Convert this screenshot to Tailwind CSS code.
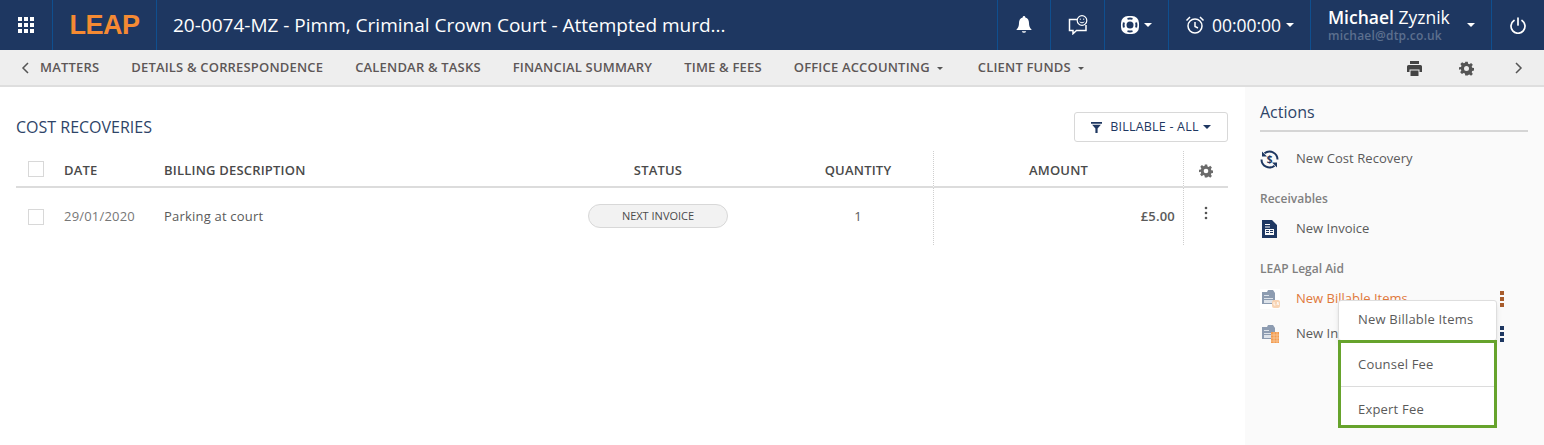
<!DOCTYPE html>
<html lang="en">
<head>
  <meta charset="UTF-8" />
  <title>Cost Recoveries - LEAP</title>
  <script src="https://cdn.jsdelivr.net/npm/@tailwindcss/browser@4"></script>
</head>
<body class="h-[445px] w-[1544px] overflow-hidden bg-white font-['Open_Sans',sans-serif] text-[13px] text-[#5a5a5a]">

  <!-- Top bar -->
  <header class="flex h-[50px] items-stretch bg-[#1e3761] text-white">
    <div class="flex w-[53px] items-center justify-center border-r border-[#0f4f8f]">
      <svg width="16" height="16" viewBox="0 0 16 16" fill="#fff"><rect x="0" y="0" width="4" height="4"/><rect x="6" y="0" width="4" height="4"/><rect x="12" y="0" width="4" height="4"/><rect x="0" y="6" width="4" height="4"/><rect x="6" y="6" width="4" height="4"/><rect x="12" y="6" width="4" height="4"/><rect x="0" y="12" width="4" height="4"/><rect x="6" y="12" width="4" height="4"/><rect x="12" y="12" width="4" height="4"/></svg>
    </div>
    <div class="flex w-[104px] items-center justify-center border-r border-[#0f4f8f] font-['Liberation_Sans',sans-serif] text-[27px] font-bold tracking-[-0.5px] text-[#f58a33]">LEAP</div>
    <div class="flex-1 pl-[16px] text-[19px] leading-[50px]">20-0074-MZ - Pimm, Criminal Crown Court - Attempted murd...</div>
    <div class="flex w-[53px] items-center justify-center border-l border-[#0f4f8f]">
      <svg width="16" height="18" viewBox="0 0 16 18" fill="#fff"><path d="M8 0a1.300 1.300 0 0 1 1.300 1.400C12 2 13 4.200 13 7c0 3 .8 5 2.500 6.500V14H.5v-.5C2.200 12 3 10 3 7c0-2.800 1-5 3.700-5.600A1.300 1.300 0 0 1 8 0z"/><path d="M5.800 15.200h4.400a2.300 2.300 0 0 1-4.400 0z"/></svg>
    </div>
    <div class="flex w-[54px] items-center justify-center border-l border-[#0f4f8f]">
      <svg width="20" height="20" viewBox="0 0 20 20" fill="none" stroke="#fff" stroke-width="1.500"><path d="M9 4.500H1.500v11H5v3.200l3.500-3.200h9.500V10"/><circle cx="14" cy="5.500" r="4.800" fill="#1e3761" stroke-width="1.200"/><path d="M11.700 6.800c1.200 1.300 3.400 1.300 4.600 0" stroke-width="1"/><path d="M12.300 3.600v1.200M15.700 3.600v1.200" stroke-width="1"/></svg>
    </div>
    <div class="flex w-[64px] items-center justify-center gap-[5px] border-l border-[#0f4f8f]">
      <svg width="18" height="18" viewBox="0 0 18 18"><rect width="18" height="18" rx="7" fill="#fff"/><circle cx="9" cy="9" r="3.500" fill="#1e3761"/><path d="M6.500 2.900Q9 2.200 11.500 2.900M15.100 6.500Q15.800 9 15.100 11.500M11.500 15.100Q9 15.800 6.500 15.100M2.900 11.500Q2.200 9 2.900 6.500" fill="none" stroke="#1e3761" stroke-width="2"/></svg>
      <span class="h-0 w-0 border-x-[4px] border-t-[4px] border-x-transparent border-t-white"></span>
    </div>
    <div class="flex w-[142px] items-center justify-center gap-[5px] border-l border-[#0f4f8f] text-[17.500px]">
      <svg class="mr-[2px]" width="20" height="20" viewBox="0 0 20 20" fill="none" stroke="#fff" stroke-width="1.500"><circle cx="10" cy="11" r="7"/><path d="M10 7v4.500l3 1.500"/><path d="M1.500 5.500L5 2M18.500 5.500L15 2"/></svg>
      <span>00:00:00</span>
      <span class="h-0 w-0 border-x-[4px] border-t-[4px] border-x-transparent border-t-white"></span>
    </div>
    <div class="flex w-[181px] items-center border-l border-[#0f4f8f] pl-[17px]">
      <div class="w-[139px]">
        <div class="-mt-[1px] text-[17.500px] leading-[20px]"><span class="font-semibold">Michael</span> Zyznik</div>
        <div class="mt-[1px] text-[12px] font-semibold leading-[15px] tracking-[0.2px] text-[#5c6f8e]">michael@dtp.co.uk</div>
      </div>
      <span class="h-0 w-0 border-x-[4px] border-t-[4px] border-x-transparent border-t-white"></span>
    </div>
    <div class="flex w-[53px] items-center justify-center border-l border-[#0f4f8f]">
      <svg width="16" height="17" viewBox="0 0 16 17" fill="none" stroke="#fff" stroke-width="1.700" stroke-linecap="round"><path d="M8 1v7"/><path d="M4 3.500a7 7 0 1 0 8 0"/></svg>
    </div>
  </header>

  <!-- Sub nav -->
  <nav class="flex h-[37px] items-center border-b-2 border-[#dedede] bg-[#eeeeee] pt-[1px] text-[#5d5757]">
    <svg class="ml-[21px] mr-[11px]" width="8" height="12" viewBox="0 0 8 12" fill="none" stroke="#555" stroke-width="1.500"><path d="M7 1L2 6l5 5"/></svg>
    <div class="flex items-center gap-[32px] text-[13px] font-semibold tracking-[0.18px]">
      <span>MATTERS</span>
      <span>DETAILS &amp; CORRESPONDENCE</span>
      <span>CALENDAR &amp; TASKS</span>
      <span>FINANCIAL SUMMARY</span>
      <span>TIME &amp; FEES</span>
      <span class="mr-[3px] flex items-center gap-[7px]">OFFICE ACCOUNTING <span class="h-0 w-0 border-x-[3px] border-t-[3px] border-x-transparent border-t-[#555]"></span></span>
      <span class="flex items-center gap-[7px]">CLIENT FUNDS <span class="h-0 w-0 border-x-[3px] border-t-[3px] border-x-transparent border-t-[#555]"></span></span>
    </div>
    <div class="ml-auto flex items-center">
      <svg width="15" height="15" viewBox="0 0 15 15" fill="#444"><path d="M3 0h9v3H3zM1.500 4h12A1.500 1.500 0 0 1 15 5.500V11h-2.500V8.500h-10V11H0V5.500A1.500 1.500 0 0 1 1.500 4z"/><path d="M3.500 9.500h8V15h-8z"/></svg>
      <svg class="ml-[37px]" width="15" height="15" viewBox="0 0 24 24" fill="#555"><path fill-rule="evenodd" d="M10 1h4l.6 3.200 2 .8 2.700-1.800 2.800 2.800-1.800 2.700.8 2 3.200.6v4l-3.200.6-.8 2 1.800 2.700-2.800 2.800-2.700-1.800-2 .8L14 23h-4l-.6-3.200-2-.8-2.700 1.800-2.800-2.800 1.800-2.700-.8-2L0 14v-4l3.200-.6.8-2-1.800-2.700 2.800-2.800 2.700 1.800 2-.8zM12 8a4 4 0 1 0 0 8 4 4 0 0 0 0-8z"/></svg>
      <svg class="ml-[41px] mr-[21px]" width="8" height="12" viewBox="0 0 8 12" fill="none" stroke="#555" stroke-width="1.500"><path d="M1 1l5 5-5 5"/></svg>
    </div>
  </nav>

  <div class="flex h-[358px]">
    <!-- Main -->
    <main class="w-[1245px] pl-[16px] pr-[17px]">
      <div class="flex h-[64px] items-end justify-between pb-[9px]">
        <h1 class="mb-[3px] text-[16px] leading-[24px] text-[#2e4468]">COST RECOVERIES</h1>
        <button class="flex h-[30px] w-[154px] items-center justify-center gap-[8px] rounded-[3px] border border-[#d8d8d8] text-[12.500px] tracking-[0.2px] text-[#1e3761]">
          <svg width="11" height="11" viewBox="0 0 10 10" fill="#1e3761"><path d="M0 0h10v1.500H0zM1 2.500h8L6 6v4H4V6z"/></svg>
          BILLABLE - ALL
          <span class="-ml-[4px] h-0 w-0 border-x-[4px] border-t-[4px] border-x-transparent border-t-[#1e3761]"></span>
        </button>
      </div>
      <!-- Table -->
      <div class="grid grid-cols-[48px_100px_350px_288px_131px_250px_45px] grid-rows-[37px_57px] tracking-[0.2px]">
        <div class="flex items-center border-b-2 border-[#dcdcdc] pl-[12px]"><span class="h-[16px] w-[16px] border border-[#d8d8d8]"></span></div>
        <div class="flex items-center border-b-2 border-[#dcdcdc] pt-[4px] font-semibold text-[#4a4a4a]">DATE</div>
        <div class="flex items-center border-b-2 border-[#dcdcdc] pt-[4px] font-semibold text-[#4a4a4a]">BILLING DESCRIPTION</div>
        <div class="flex items-center justify-center border-b-2 border-[#dcdcdc] pt-[4px] font-semibold text-[#4a4a4a]">STATUS</div>
        <div class="flex items-center justify-center border-b-2 border-[#dcdcdc] pr-[19px] pt-[4px] font-semibold text-[#4a4a4a]">QUANTITY</div>
        <div class="flex items-center justify-center border-b-2 border-l border-[#dcdcdc] border-l-[#cfcfcf] [border-left-style:dotted] pt-[4px] font-semibold text-[#4a4a4a]">AMOUNT</div>
        <div class="flex items-center justify-center border-b-2 border-l border-[#dcdcdc] border-l-[#cfcfcf] [border-left-style:dotted] pt-[4px]">
          <svg width="14" height="14" viewBox="0 0 24 24" fill="#6b6b6b"><path fill-rule="evenodd" d="M10 1h4l.6 3.200 2 .8 2.700-1.800 2.800 2.800-1.800 2.700.8 2 3.200.6v4l-3.200.6-.8 2 1.800 2.700-2.800 2.800-2.700-1.800-2 .8L14 23h-4l-.6-3.200-2-.8-2.700 1.800-2.800-2.800 1.800-2.700-.8-2L0 14v-4l3.200-.6.8-2-1.800-2.700 2.800-2.800 2.700 1.800 2-.8zM12 8a4 4 0 1 0 0 8 4 4 0 0 0 0-8z"/></svg>
        </div>

        <div class="flex items-center pl-[12px]"><span class="h-[16px] w-[16px] border border-[#d8d8d8]"></span></div>
        <div class="flex items-center text-[#777]">29/01/2020</div>
        <div class="flex items-center">Parking at court</div>
        <div class="flex items-center justify-center"><span class="-mt-[1px] flex h-[24px] w-[140px] items-center justify-center rounded-full border border-[#d8d8d8] bg-[#f2f2f2] text-[11px] tracking-normal text-[#4a4a4a]">NEXT INVOICE</span></div>
        <div class="flex items-center justify-center pr-[19px]">1</div>
        <div class="flex items-center justify-end border-l border-dotted border-[#cfcfcf] pr-[8px] font-semibold">£5.00</div>
        <div class="flex justify-center border-l border-dotted border-[#cfcfcf] pt-[18px]">
          <svg width="4" height="14" viewBox="0 0 4 14" fill="#555"><circle cx="2" cy="2" r="1.300"/><circle cx="2" cy="7" r="1.300"/><circle cx="2" cy="12" r="1.300"/></svg>
        </div>
      </div>
    </main>

    <!-- Actions sidebar -->
    <aside class="relative w-[299px] bg-[#fafafa] pl-[15px] pr-[16px]">
      <h2 class="flex h-[45px] items-end border-b-2 border-[#d5d5d5] pb-[6px] text-[16px] leading-[24px] text-[#2e4468]">Actions</h2>
      <div class="mt-[12px] flex h-[30px] items-center">
        <svg width="19" height="19" viewBox="0 0 19 19" fill="none" stroke="#1e3761" stroke-width="2"><path d="M17.500 9.500A8 8 0 0 0 4.500 3.300"/><path d="M1.500 9.500A8 8 0 0 0 14.500 15.700"/><path d="M2 1.500L7 6.500H2zM17 17.500L12 12.500H17z" fill="#1e3761" stroke="none"/><text x="9.500" y="13" text-anchor="middle" font-size="10" font-weight="700" fill="#1e3761" stroke="none" font-family="Open Sans">$</text></svg>
        <span class="ml-[17px] tracking-[0.05px]">New Cost Recovery</span>
      </div>
      <div class="mt-[16px] text-[12px] font-semibold leading-[18px] text-[#808080]">Receivables</div>
      <div class="mt-[6px] flex h-[30px] items-center pl-[2px]">
        <svg width="15" height="18" viewBox="0 0 15 18" fill="#1e3761"><path fill-rule="evenodd" d="M0 0h10l5 5v13H0zM3 4v1h5V4zM3 6.500v1h5v-1zM3 9v6h9V9z"/><path d="M4 10h3v1H4zM8 10h3v1H8zM4 12h3v1H4zM8 12h3v1H8z"/></svg>
        <span class="ml-[19px]">New Invoice</span>
      </div>
      <div class="mt-[16px] text-[12px] font-semibold leading-[18px] text-[#808080]">LEAP Legal Aid</div>
      <div class="mt-[6px] flex h-[30px] items-center">
        <svg width="20" height="20" viewBox="0 0 20 20"><rect width="20" height="20" fill="#fff"/><path d="M2 3h5l1-2h5l2 3v11H2z" fill="#8d9cb1"/><path d="M4 6h5v1H4zM4 9h9v1H4zM4 11h9v3H4z" fill="#dde3ea"/><rect x="12" y="11" width="8" height="8" rx="2" fill="#f8d4b4"/><path d="M14 13v3h1.500M17 16l.8-3 .8 3" fill="none" stroke="#fff" stroke-width=".8"/></svg>
        <span class="ml-[16px] text-[#e0783a]">New Billable Items</span>
        <svg class="ml-auto mr-[24px]" width="4" height="16" viewBox="0 0 4 16" fill="#a85c2c"><rect y="0" width="4" height="4"/><rect y="6" width="4" height="4"/><rect y="12" width="4" height="4"/></svg>
      </div>
      <div class="mt-[5px] flex h-[30px] items-center">
        <svg width="20" height="20" viewBox="0 0 20 20"><path d="M2 3h5l1-2h5l2 3v11H2z" fill="#8d9cb1"/><path d="M4 6h5v1H4zM4 9h7v1H4zM4 11h7v3H4z" fill="#dde3ea"/><rect x="11" y="8" width="8" height="11" fill="#f29b50"/><path d="M11 11h8M11 14h8M11 17h8M14 8v11M17 8v11" stroke="#fbd0a8" stroke-width=".7"/></svg>
        <span class="ml-[16px]">New Invoice</span>
        <svg class="ml-auto mr-[24px]" width="4" height="16" viewBox="0 0 4 16" fill="#1e3761"><rect y="0" width="4" height="4"/><rect y="6" width="4" height="4"/><rect y="12" width="4" height="4"/></svg>
      </div>

      <!-- Popup menu -->
      <div class="absolute left-[93px] top-[213px] w-[159px] rounded-[3px] border border-[#dedede] bg-white tracking-[0.2px] shadow-md">
        <div class="flex h-[39px] items-center pb-[1px] pl-[19px]">New Billable Items</div>
      </div>
      <div class="absolute left-[93px] top-[253px] h-[88px] w-[159px] border-[3px] border-[#66a32c] bg-white tracking-[0.2px]">
        <div class="flex h-[44px] items-center border-b border-[#dcdcdc] pl-[17px] pt-[1px]">Counsel Fee</div>
        <div class="flex h-[38px] items-center pl-[17px] pt-[8px]">Expert Fee</div>
      </div>
    </aside>
  </div>
</body>
</html>
